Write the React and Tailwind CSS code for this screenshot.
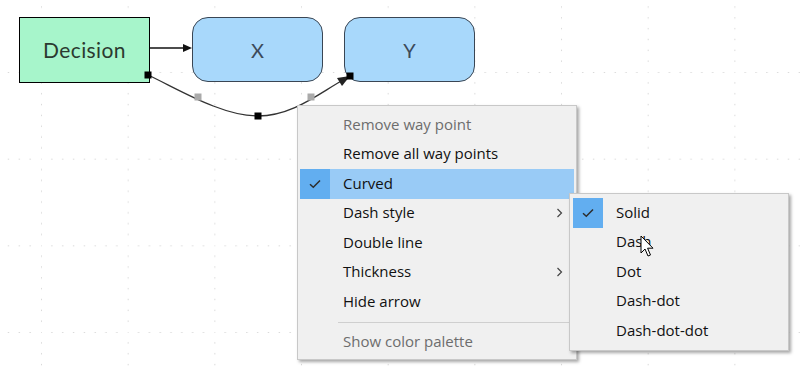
import React from 'react';

const menuFont = { fontFamily: '"Open Sans", "Noto Sans", sans-serif' };

const Check = () => (
  <svg width="12" height="10" viewBox="0 0 12 10">
    <path d="M1 5.2 L4.3 8.3 L11 1.5" fill="none" stroke="#2d2d2d" strokeWidth="1.5" />
  </svg>
);

const Chevron = () => (
  <svg width="7" height="10" viewBox="0 0 7 10">
    <path d="M1.5 1 L5.5 5 L1.5 9" fill="none" stroke="#444" strokeWidth="1.2" />
  </svg>
);

const MenuItem = ({ label, disabled, checked, highlight, sub, checkOnly }) => (
  <div className={`relative flex h-[29.5px] items-center ${highlight ? 'bg-[#99cbf6]' : ''}`}>
    <div
      className={`flex h-full w-[30px] shrink-0 items-center justify-center ${
        checked && (highlight || checkOnly) ? 'bg-[#62aef0]' : ''
      }`}
    >
      {checked && <Check />}
    </div>
    <span
      className={`pl-[13px] pb-[2px] text-[15px] ${disabled ? 'text-[#6d6d6d]' : 'text-[#111]'}`}
    >
      {label}
    </span>
    {sub && (
      <span className="absolute right-[11px] top-1/2 -translate-y-1/2">
        <Chevron />
      </span>
    )}
  </div>
);

const Grid = () => (
  <svg className="absolute inset-0" width="800" height="369">
    <defs>
      <pattern
        id="grid"
        width="86.67"
        height="86.67"
        patternUnits="userSpaceOnUse"
        patternTransform="translate(41 72)"
      >
        {[0, 1, 2, 3, 4, 5, 6, 7].map((i) => (
          <React.Fragment key={i}>
            <rect x="-0.6" y={i * 10.83 - 0.6} width="1.3" height="1.3" fill="#c4c4c4" />
            {i > 0 && <rect x={i * 10.83 - 0.6} y="-0.6" width="1.3" height="1.3" fill="#c4c4c4" />}
          </React.Fragment>
        ))}
      </pattern>
    </defs>
    <rect width="800" height="369" fill="url(#grid)" />
  </svg>
);

const Edges = () => (
  <svg className="absolute inset-0" width="800" height="369">
    <line x1="150" y1="48" x2="184" y2="48" stroke="#111" strokeWidth="1.3" />
    <path d="M183 44 L192 48 L183 52 Z" fill="#111" />
    <path
      d="M148 75 C 180 90 222 116 258 116 C 292 116 318 94 343 80"
      fill="none"
      stroke="#333"
      strokeWidth="1.3"
    />
    <path d="M337 78 L350 76 L342 86 Z" fill="#222" />
    <rect x="144.5" y="71.5" width="7" height="7" fill="#000" />
    <rect x="254.5" y="112.5" width="7" height="7" fill="#000" />
    <rect x="346.5" y="72.5" width="7" height="7" fill="#000" />
    <rect x="194.5" y="93.5" width="7" height="7" fill="#aaa" />
    <rect x="307.5" y="93.5" width="7" height="7" fill="#aaa" />
  </svg>
);

const Cursor = () => (
  <svg className="absolute left-[640px] top-[235px]" width="16" height="24" viewBox="0 0 16 24">
    <path
      d="M1 1 L1 18 L5 14 L8 21 L10.5 20 L7.6 13.2 L13 13.2 Z"
      fill="#fff"
      stroke="#000"
      strokeWidth="1"
      strokeLinejoin="round"
    />
  </svg>
);

const nodeFont = { fontFamily: '"Lato", sans-serif' };

export default function App() {
  return (
    <div className="relative h-[369px] w-[800px] overflow-hidden bg-white">
      <Grid />

      <div
        className="absolute left-[19px] top-[17px] flex h-[66px] w-[131px] items-center justify-center border border-black bg-[#a7f5cb] text-[21px] tracking-[0.4px] text-[#2b3a30]"
        style={nodeFont}
      >
        Decision
      </div>
      <div
        className="absolute left-[192px] top-[17px] flex h-[65px] w-[131px] items-center justify-center rounded-[16px] border border-[#3a4654] bg-[#a8d8fb] text-[20px] text-[#3c4a5a]"
        style={nodeFont}
      >
        X
      </div>
      <div
        className="absolute left-[344px] top-[17px] flex h-[65px] w-[131px] items-center justify-center rounded-[16px] border border-[#3a4654] bg-[#a8d8fb] text-[20px] text-[#3c4a5a]"
        style={nodeFont}
      >
        Y
      </div>

      <Edges />

      <div
        className="absolute left-[297px] top-[105px] w-[280px] border border-[#c8c8c8] bg-[#f0f0f0] px-[2px] pt-[4px] pb-[2px] shadow-[2px_2px_3px_rgba(0,0,0,0.35)]"
        style={menuFont}
      >
        <MenuItem label="Remove way point" disabled />
        <MenuItem label="Remove all way points" />
        <MenuItem label="Curved" checked highlight />
        <MenuItem label="Dash style" sub />
        <MenuItem label="Double line" />
        <MenuItem label="Thickness" sub />
        <MenuItem label="Hide arrow" />
        <div className="ml-[38px] mr-[-2px] my-[5px] h-px bg-[#cfcfcf]" />
        <MenuItem label="Show color palette" disabled />
      </div>

      <div
        className="absolute left-[569px] top-[193px] w-[220px] border border-[#c8c8c8] bg-[#f0f0f0] px-[3px] pt-[4px] pb-[4px] shadow-[2px_2px_3px_rgba(0,0,0,0.35)]"
        style={menuFont}
      >
        <MenuItem label="Solid" checked checkOnly />
        <MenuItem label="Dash" />
        <MenuItem label="Dot" />
        <MenuItem label="Dash-dot" />
        <MenuItem label="Dash-dot-dot" />
      </div>

      <Cursor />
    </div>
  );
}
